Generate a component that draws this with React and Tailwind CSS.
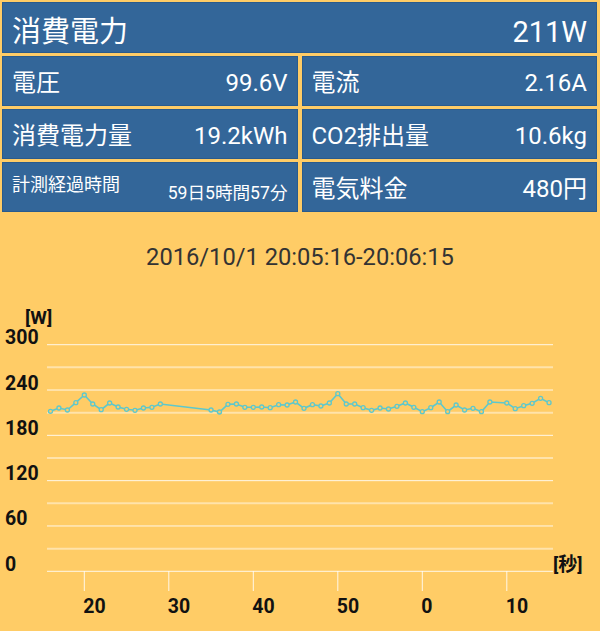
import React from "react";

const FONT = { fontFamily: 'Roboto, "Noto Sans CJK JP", sans-serif' };

// [second, y] — seconds from 20:05:00, y in page pixels
const samples = [
  [16, 412.3], [17, 409], [18, 411], [19, 403.7], [20, 396], [21, 405], [22, 410.7],
  [23, 404], [24, 408], [25, 410.3], [26, 411.3], [27, 409], [28, 408.3], [29, 405],
  [35, 411], [36, 413], [37, 405.3], [38, 405], [39, 408.3], [40, 408.3], [41, 408],
  [42, 408.7], [43, 405.7], [44, 406], [45, 403], [46, 409.3], [47, 405.7], [48, 407],
  [49, 404], [50, 394.7], [51, 405], [52, 405], [53, 408.7], [54, 411.3], [55, 409],
  [56, 410], [57, 407.3], [58, 404], [59, 408.3], [60, 412.7], [61, 408.7], [62, 403],
  [63, 412.7], [64, 406], [65, 411], [66, 409.3], [67, 412.7], [68, 403], [70, 404],
  [71, 409.7], [72, 406.7], [73, 404.3], [74, 399.3], [75, 403.7],
];

const xOf = (s) => 84.3 + (s - 20) * 8.45;
const lineY = (i) => 572.3 - i * 22.66;

const yLabels = ["0", "60", "120", "180", "240", "300"];
const xTicks = [["20", 20], ["30", 30], ["40", 40], ["50", 50], ["0", 60], ["10", 70]];

function Card({ children, className = "" }) {
  return (
    <div
      className={`bg-[#336699] border border-[#2a5b8d] text-white flex justify-between px-[9px] ${className}`}
    >
      {children}
    </div>
  );
}

function PowerChart() {
  const points = samples.map(([s, y]) => `${xOf(s).toFixed(1)},${y}`).join(" ");
  return (
    <svg width="600" height="341" viewBox="0 290 600 341" className="block">
      {Array.from({ length: 11 }).map((_, i) =>
        i % 2 === 0 ? (
          <line key={i} x1="47" x2="553" y1={lineY(i)} y2={lineY(i)} stroke="#ffffff" strokeOpacity="0.85" strokeWidth="1" />
        ) : (
          <line key={i} x1="47" x2="553" y1={lineY(i)} y2={lineY(i)} stroke="#ffffff" strokeOpacity="0.45" strokeWidth="2" />
        )
      )}
      {xTicks.map(([label, s]) => (
        <g key={label}>
          <line x1={xOf(s)} x2={xOf(s)} y1="572" y2="592" stroke="#ffffff" strokeOpacity="0.85" strokeWidth="1" />
          <text x={xOf(s) - 1} y="614" fontSize="19.5" fontWeight="700" fill="#111" style={FONT}>
            {label}
          </text>
        </g>
      ))}
      {yLabels.map((label, i) => (
        <text key={label} x="5" y={lineY(i * 2) - 0.5} fontSize="19.5" fontWeight="700" fill="#111" style={FONT}>
          {label}
        </text>
      ))}
      <text x="25" y="325" fontSize="19" fontWeight="700" fill="#111" style={FONT}>[W]</text>
      <text x="553" y="572" fontSize="19" fontWeight="700" fill="#111" style={FONT}>[秒]</text>
      <polyline points={points} fill="none" stroke="#5ec8cc" strokeWidth="1.6" />
      {samples.map(([s, y]) => (
        <circle key={s} cx={xOf(s)} cy={y} r="2" fill="#ffcc66" stroke="#5ec8cc" strokeWidth="1.3" />
      ))}
    </svg>
  );
}

export default function App() {
  return (
    <div className="w-[600px] h-[631px] bg-[#ffcc66] overflow-hidden" style={FONT}>
      <div className="pt-[2px] pl-[2px] pr-[3px] flex flex-col gap-[3px]">
        <Card className="h-[51px] items-center text-[29px] leading-none pt-[9px]">
          <span>消費電力</span>
          <span>211W</span>
        </Card>
        <div className="grid grid-cols-2 gap-x-[4px] gap-y-[3px]">
          <Card className="h-[50px] items-center text-[24px] leading-none pt-[4px]">
            <span>電圧</span>
            <span>99.6V</span>
          </Card>
          <Card className="h-[50px] items-center text-[24px] leading-none pt-[4px]">
            <span>電流</span>
            <span>2.16A</span>
          </Card>
          <Card className="h-[50px] items-center text-[24px] leading-none pt-[4px]">
            <span>消費電力量</span>
            <span>19.2kWh</span>
          </Card>
          <Card className="h-[50px] items-center text-[24px] leading-none pt-[4px]">
            <span>CO2排出量</span>
            <span>10.6kg</span>
          </Card>
          <Card className="h-[50px] leading-none">
            <span className="self-start pt-[13px] text-[18px]">計測経過時間</span>
            <span className="self-end pb-[8px] text-[17.6px]">59日5時間57分</span>
          </Card>
          <Card className="h-[50px] items-center text-[24px] leading-none pt-[4px]">
            <span>電気料金</span>
            <span>480円</span>
          </Card>
        </div>
      </div>
      <div className="h-[77px] pt-[29px] text-center text-[23.7px] leading-[32px] text-[#333333]">
        2016/10/1 20:05:16-20:06:15
      </div>
      <PowerChart />
    </div>
  );
}
